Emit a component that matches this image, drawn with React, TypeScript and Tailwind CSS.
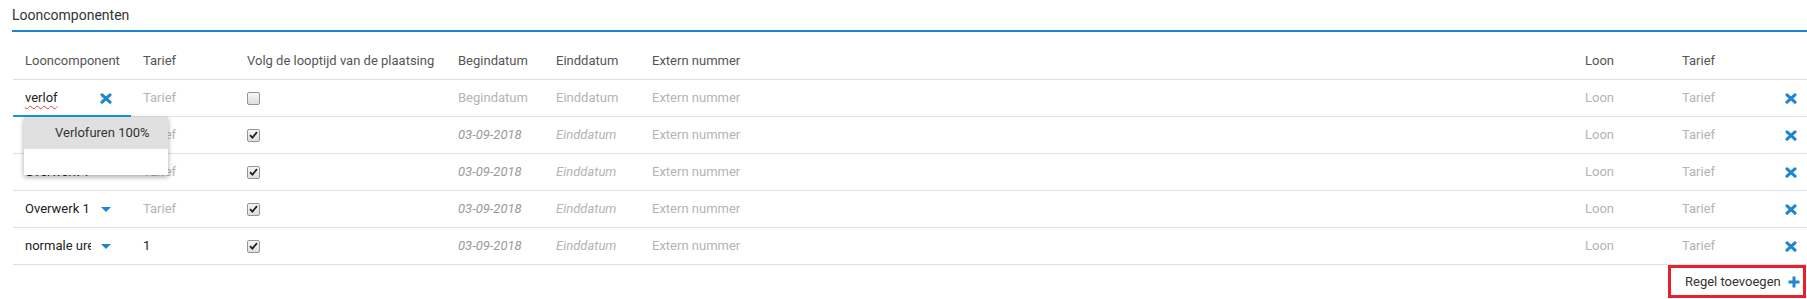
import React from "react";

const COLS = "grid grid-cols-[118px_104px_211px_98px_96px_1fr_97px_97px_40px]";

function XIcon() {
  return (
    <svg width="12" height="11" viewBox="0 0 12 11" className="block">
      <path d="M2 1.8 L10 9.2 M10 1.8 L2 9.2" stroke="#1e86cf" strokeWidth="3.1" strokeLinecap="round" />
    </svg>
  );
}

function PlusIcon() {
  return (
    <svg width="12" height="12" viewBox="0 0 12 12" className="block">
      <path d="M6 0.5 V11.5 M0.5 6 H11.5" stroke="#1e86cf" strokeWidth="3" />
    </svg>
  );
}

function Caret() {
  return (
    <svg width="10" height="5" viewBox="0 0 10 5" className="block">
      <polygon points="0,0 10,0 5,5" fill="#1e86cf" />
    </svg>
  );
}

function Check({ checked }: { checked: boolean }) {
  return (
    <div className="w-[13px] h-[13px] rounded-[2px] border border-[#959595] bg-gradient-to-b from-[#f6f6f6] to-[#dedede] flex items-center justify-center">
      {checked && (
        <svg width="9" height="8" viewBox="0 0 9 8" className="block">
          <path d="M1 4.2 L3.4 6.6 L8 1.2" stroke="#222" strokeWidth="1.8" fill="none" />
        </svg>
      )}
    </div>
  );
}

type Row = {
  name: string;
  tarief?: string;
  checked: boolean;
  date?: string;
};

const rows: Row[] = [
  { name: "Overwerk 1", checked: true, date: "03-09-2018" },
  { name: "Overwerk 1", checked: true, date: "03-09-2018" },
  { name: "Overwerk 1", checked: true, date: "03-09-2018" },
  { name: "normale uren", tarief: "1", checked: true, date: "03-09-2018" },
];

const ph = "text-[#b4b4b4]";

export default function App() {
  return (
    <div className="relative w-[1807px] h-[299px] bg-white text-[13px] text-[#333] font-['Roboto','Liberation_Sans',sans-serif]">
      <div className="pl-[12px]">
        <div className="h-[30px] flex items-center text-[14px] text-[#333]">Looncomponenten</div>
        <div className="h-[2px] bg-[#1a86d0]" />
        <div className="ml-[1px]">
          <div className={`${COLS} h-[48px] pt-[11px] items-center border-b border-[#e0e0e0] text-[#555]`}>
            <div className="pl-[12px]">Looncomponent</div>
            <div className="pl-[12px]">Tarief</div>
            <div className="pl-[12px]">Volg de looptijd van de plaatsing</div>
            <div className="pl-[12px]">Begindatum</div>
            <div className="pl-[12px]">Einddatum</div>
            <div className="pl-[12px]">Extern nummer</div>
            <div className="pl-[12px]">Loon</div>
            <div className="pl-[12px]">Tarief</div>
            <div />
          </div>

          <div className={`${COLS} h-[37px] items-center border-b border-[#e0e0e0]`}>
            <div className="relative h-full flex items-center justify-between pl-[12px] pr-[19px]">
              <span className="text-[#222] underline decoration-wavy decoration-[#e0453a] decoration-1 underline-offset-[3px]">verlof</span>
              <XIcon />
              <div className="absolute left-0 right-0 bottom-[-1px] h-[2px] bg-[#1a97dd]" />
            </div>
            <div className={`pl-[12px] ${ph}`}>Tarief</div>
            <div className="pl-[12px]"><Check checked={false} /></div>
            <div className={`pl-[12px] ${ph}`}>Begindatum</div>
            <div className={`pl-[12px] ${ph}`}>Einddatum</div>
            <div className={`pl-[12px] ${ph}`}>Extern nummer</div>
            <div className={`pl-[12px] ${ph}`}>Loon</div>
            <div className={`pl-[12px] ${ph}`}>Tarief</div>
            <div className="flex justify-end pr-[10px]"><XIcon /></div>
          </div>

          {rows.map((r, i) => (
            <div key={i} className={`${COLS} h-[37px] items-center border-b border-[#e0e0e0]`}>
              <div className="flex items-center justify-between pl-[12px] pr-[20px]">
                <span className="w-[66px] overflow-hidden whitespace-nowrap text-[#222]">{r.name}</span>
                <Caret />
              </div>
              <div className={`pl-[12px] ${r.tarief ? "text-[#222]" : ph}`}>{r.tarief ?? "Tarief"}</div>
              <div className="pl-[12px]"><Check checked={r.checked} /></div>
              <div className="pl-[12px] italic text-[#9a9a9a]">{r.date}</div>
              <div className={`pl-[12px] italic ${ph}`}>Einddatum</div>
              <div className={`pl-[12px] ${ph}`}>Extern nummer</div>
              <div className={`pl-[12px] ${ph}`}>Loon</div>
              <div className={`pl-[12px] ${ph}`}>Tarief</div>
              <div className="flex justify-end pr-[10px]"><XIcon /></div>
            </div>
          ))}

          <div className="flex justify-end mr-[1px]">
            <div className="w-[138px] h-[33px] border-[3px] border-[#e8202a] bg-white flex items-center pl-[14px] gap-[7px] text-[#333]">
              <span className="whitespace-nowrap">Regel toevoegen</span>
              <PlusIcon />
            </div>
          </div>
        </div>
      </div>

      <div className="absolute left-[24px] top-[117px] w-[144px] h-[58px] bg-white shadow-[0_2px_5px_rgba(0,0,0,0.35)]">
        <div className="h-[32px] bg-[#e0e0e0] flex items-center pl-[31px] text-[#333] whitespace-nowrap">Verlofuren 100%</div>
      </div>
    </div>
  );
}
